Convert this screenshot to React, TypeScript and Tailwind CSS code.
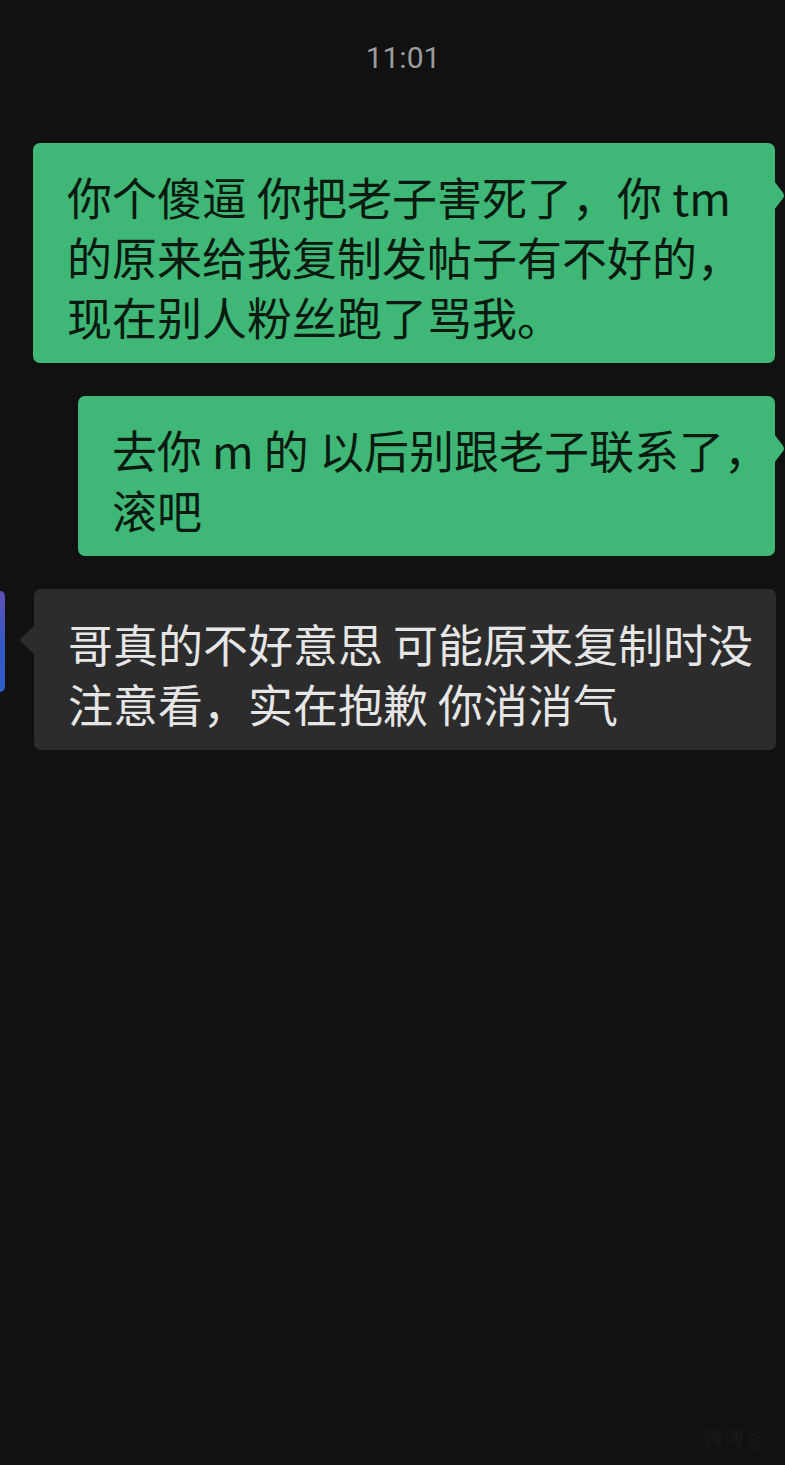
import React from "react";

const cjk = { fontFamily: '"Noto Sans CJK SC", "Noto Sans", sans-serif' };

function RightTail({ color }: { color: string }) {
  return (
    <svg className="absolute top-[38px] right-[-10px] w-[11px] h-[29px]" viewBox="0 0 11 29">
      <path d="M0 0 L9.2 12 Q10.8 14.5 9.2 17 L0 29 Z" fill={color} />
    </svg>
  );
}

function LeftTail({ color }: { color: string }) {
  return (
    <svg className="absolute top-[36px] left-[-15px] w-[16px] h-[30px]" viewBox="0 0 16 30">
      <path d="M16 0 L2 13 Q0 15 2 17 L16 30 Z" fill={color} />
    </svg>
  );
}

function SentBubble({ lines, left }: { lines: string[]; left: string }) {
  return (
    <div className={`relative ${left} mr-[10px] rounded-[7px] bg-[#3fb877] pl-[34px] pr-[20px] pt-[24px] pb-[16px]`}>
      <RightTail color="#3fb877" />
      {lines.map((l) => (
        <div key={l} className="whitespace-pre text-[45px] leading-[60px] text-[#0b1a10]" style={cjk}>
          {l}
        </div>
      ))}
    </div>
  );
}

export default function App() {
  return (
    <div className="relative w-[785px] h-[1465px] overflow-hidden bg-[#111111] flex flex-col">
      <div
        className="pt-[40px] pl-[21px] text-center text-[30px] leading-[36px] text-[#9c9c9c]"
        style={{ fontFamily: "Roboto, sans-serif" }}
      >
        11:01
      </div>

      <div className="mt-[67px] flex flex-col gap-[33px]">
        <SentBubble
          left="ml-[33px]"
          lines={["你个傻逼 你把老子害死了，你 tm", "的原来给我复制发帖子有不好的，", "现在别人粉丝跑了骂我。"]}
        />
        <SentBubble left="ml-[78px]" lines={["去你 m 的 以后别跟老子联系了，", "滚吧"]} />

        <div className="flex items-start">
          <div className="mt-[2px] w-[5px] h-[101px] rounded-r-[5px] bg-linear-to-b from-[#5f4fb8] via-[#3458c4] to-[#2f5ccc]" />
          <div className="relative ml-[29px] mr-[9px] flex-1 rounded-[7px] bg-[#2c2c2c] pl-[34px] pr-[20px] pt-[25px] pb-[16px]">
            <LeftTail color="#2c2c2c" />
            {["哥真的不好意思 可能原来复制时没", "注意看，实在抱歉 你消消气"].map((l) => (
              <div key={l} className="whitespace-pre text-[45px] leading-[60px] text-[#e6e6e6]" style={cjk}>
                {l}
              </div>
            ))}
          </div>
        </div>
      </div>

      <div
        className="absolute right-[18px] bottom-[12px] text-[20px] text-[#191919]"
        style={cjk}
      >
        微博 @
      </div>
    </div>
  );
}
